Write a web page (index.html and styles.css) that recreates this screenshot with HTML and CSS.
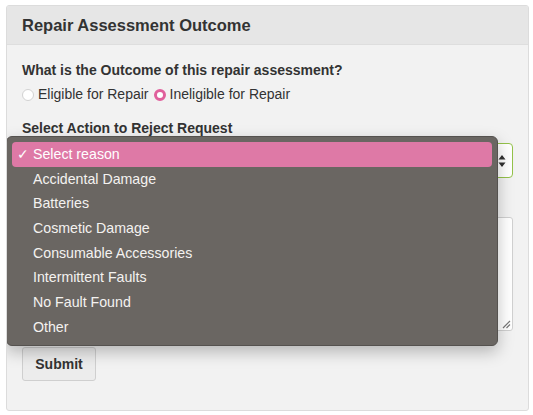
FILE: index.html
```html
<!DOCTYPE html>
<html>
<head>
<meta charset="utf-8">
<link rel="stylesheet" href="styles.css">
</head>
<body>
<div class="panel">
  <div class="panel-head">Repair Assessment Outcome</div>
  <div class="panel-body">
    <div class="q-label">What is the Outcome of this repair assessment?</div>
    <div class="radios">
      <span class="radio"></span><span class="radio-text">Eligible for Repair</span>
      <span class="radio checked"></span><span class="radio-text">Ineligible for Repair</span>
    </div>
    <div class="q-label sel-label">Select Action to Reject Request</div>
    <div class="select-wrap">
      <div class="select">
        <svg class="arrows" width="8" height="14" viewBox="0 0 8 14"><path d="M4 1 L7.5 5.5 L0.5 5.5 Z M4 13 L7.5 8.5 L0.5 8.5 Z" fill="#333"/></svg>
      </div>
      <div class="menu">
        <div class="opt active"><span class="check">✓</span>Select reason</div>
        <div class="opt">Accidental Damage</div>
        <div class="opt">Batteries</div>
        <div class="opt">Cosmetic Damage</div>
        <div class="opt">Consumable Accessories</div>
        <div class="opt">Intermittent Faults</div>
        <div class="opt">No Fault Found</div>
        <div class="opt">Other</div>
      </div>
    </div>
    <div class="textarea">
      <svg class="grip" width="10" height="10" viewBox="0 0 10 10"><path d="M2 9 L9 2 M5.5 9 L9 5.5" stroke="#777" stroke-width="1.2"/></svg>
    </div>
    <button class="btn">Submit</button>
  </div>
</div>
</body>
</html>
```
FILE: styles.css
```css
* { box-sizing: border-box; }
html, body { margin: 0; padding: 0; background: #fff; }
body {
  font-family: "Liberation Sans", Arial, Helvetica, sans-serif;
  color: #333;
  padding: 5px 4px 0 6px;
}
.panel {
  width: 523px;
  height: 406px;
  border: 1px solid #dcdcdc;
  border-radius: 3px;
  background: #f2f2f2;
  overflow: hidden;
}
.panel-head {
  height: 39px;
  background: #e6e6e6;
  border-bottom: 1px solid #dedede;
  padding: 10px 0 0 15px;
  font-size: 16.5px;
  font-weight: bold;
  color: #333;
}
.panel-body {
  padding: 16px 15px 0 15px;
}
.q-label {
  font-size: 14px;
  font-weight: bold;
  color: #333;
  line-height: 18px;
}
.radios {
  display: flex;
  align-items: center;
  margin-top: 6px;
  font-size: 14px;
  line-height: 18px;
  color: #333;
}
.radio {
  width: 12px;
  height: 12px;
  border-radius: 50%;
  background: #fff;
  border: 1px solid #d2d2d2;
  margin: 1px 4px 0 0;
  flex: none;
}
.radio.checked {
  border: 3.5px solid #e0609c;
  background: #fff;
  margin-left: 5px;
}
.sel-label { margin-top: 16px; }
.select-wrap {
  position: relative;
  margin-top: 6px;
}
.select {
  height: 35px;
  border: 1.5px solid #94c24a;
  border-radius: 4px;
  background: #fff;
  display: flex;
  align-items: center;
  justify-content: flex-end;
  padding: 0 6px 0 10px;
}
.arrows { margin-top: 1px; }
.menu {
  position: absolute;
  left: -16px;
  top: -7px;
  width: 492px;
  height: 210px;
  background: #6a6662;
  border: 1px solid #55524f;
  border-radius: 6px;
  padding: 5px 5px 0 5px;
  box-shadow: 0 6px 16px rgba(0,0,0,0.25);
  z-index: 2;
}
.opt {
  height: 24.7px;
  line-height: 25px;
  padding-left: 21px;
  color: #f4f2f0;
  font-size: 14.2px;
  position: relative;
}
.opt.active {
  background: #de79a6;
  border-radius: 4px;
  color: #fff;
}
.check {
  position: absolute;
  left: 5px;
  top: 0;
  font-size: 14px;
}
.textarea {
  margin-top: 39px;
  height: 114px;
  border: 1px solid #d0d0d0;
  border-radius: 3px;
  background: #fff;
  position: relative;
}
.grip {
  position: absolute;
  right: 1px;
  bottom: 1px;
}
.btn {
  display: block;
  margin-top: 16px;
  width: 74px;
  height: 34px;
  border: 1px solid #cfcfcf;
  border-radius: 3px;
  background: #ececec;
  font-family: "Liberation Sans", Arial, sans-serif;
  font-size: 14px;
  font-weight: bold;
  color: #333;
  padding: 0;
}
```
